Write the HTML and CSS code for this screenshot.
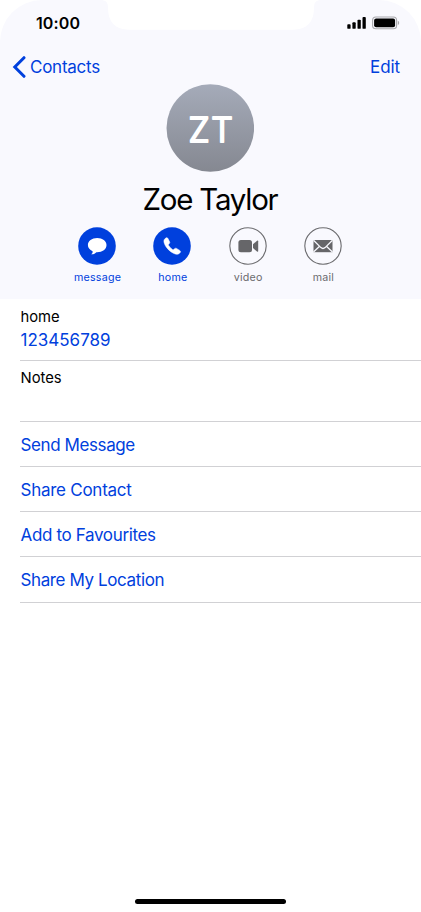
FILE: index.html
```html
<!DOCTYPE html>
<html lang="en">
<head>
<meta charset="utf-8">
<title>Zoe Taylor</title>
<link rel="stylesheet" href="styles.css">
</head>
<body>
<main class="phone">
  <header class="header">
    <svg class="notch" width="222" height="30" viewBox="0 0 222 30"><path d="M0 0C6 0 8 2 8 8C8 22 15 29.700 29 29.700H193C207 29.700 214 22 214 8C214 2 216 0 222 0Z" fill="#fff"/></svg>
    <div class="status">
      <span class="time">10:00</span>
      <svg class="indicators" width="52" height="14" viewBox="0 0 52 14">
        <rect x="0.300" y="8.200" width="3.300" height="4.600" rx="0.900"/>
        <rect x="5.400" y="6.300" width="3.300" height="6.500" rx="0.900"/>
        <rect x="10.500" y="3.700" width="3.300" height="9.100" rx="0.900"/>
        <rect x="15.500" y="1" width="3.300" height="11.800" rx="0.900"/>
        <rect x="25.600" y="1" width="24" height="11.800" rx="3.300" fill="none" stroke="#a9a9ad" stroke-width="1.100"/>
        <rect x="27.100" y="2.500" width="21" height="8.800" rx="2"/>
        <path d="M50.800 4.800Q52.200 5.400 52.200 6.900T50.800 9Z" fill="#a9a9ad"/>
      </svg>
    </div>
    <nav class="nav">
      <a class="back"><svg width="14" height="22" viewBox="0 0 14 22"><path d="M12 1.700L2.800 11L12 20.300" fill="none" stroke="#0040dd" stroke-width="3" stroke-linecap="round" stroke-linejoin="miter"/></svg><span class="contacts">Contacts</span></a>
      <a class="edit">Edit</a>
    </nav>
    <svg class="avatar" width="88" height="88" viewBox="0 0 88 88">
      <defs><linearGradient id="shade" x1="0" y1="0" x2="0" y2="1"><stop offset="0" stop-color="#a5abb9"/><stop offset="1" stop-color="#858891"/></linearGradient></defs>
      <circle cx="44.300" cy="44" r="43.800" fill="url(#shade)"/>
      <text class="initials" x="22.600 45.200" y="57.900">ZT</text>
    </svg>
    <h1 class="name">Zoe Taylor</h1>
    <div class="actions">
      <a class="action"><svg width="38" height="38" viewBox="0 0 38 38"><circle cx="19" cy="19" r="18.800" fill="#0040dd"/><path d="M19.200 11C13.900 11 9.900 14 9.900 18C9.900 20.700 11.600 22.900 14.600 24.200C14.900 25.700 14 26.700 13.100 27.200C15.300 27.500 17.300 26.400 18.300 25.200C24 25.500 28.500 22.400 28.500 18C28.500 14 24.500 11 19.200 11Z" fill="#fff"/></svg><span>message</span></a>
      <a class="action"><svg width="38" height="38" viewBox="0 0 38 38"><circle cx="19" cy="19" r="18.800" fill="#0040dd"/><path d="M13.300 10.800C11.700 11.600 10.500 13 11 15.200C12.100 20.100 17.300 25.400 22.300 27C24.500 27.700 26.500 26.800 27.400 25.200C27.700 24.500 27.400 23.900 26.700 23.400L23.500 21.400C22.800 21 22.200 21.200 21.600 21.700L20.600 22.500C20.200 22.800 19.900 22.700 19.500 22.500C17.900 21.400 16.700 20 15.600 18.400C15.300 17.900 15.300 17.600 15.700 17.200L16.500 16.200C16.900 15.700 16.900 15.200 16.500 14.600L14.800 11.300C14.400 10.600 13.900 10.500 13.300 10.800Z" fill="#fff" stroke="#fff" stroke-width="0.500"/></svg><span>home</span></a>
      <a class="action off"><svg width="38" height="38" viewBox="0 0 38 38"><circle cx="19" cy="19" r="18.200" fill="none" stroke="#6b6b6e" stroke-width="1.100"/><rect x="9.400" y="13" width="13.600" height="12.200" rx="2.500" fill="#666669"/><path d="M24 17.300L28 13.700Q29.200 13.100 29.200 14.300V24Q29.200 25.200 28 24.500L24 21Z" fill="#666669"/></svg><span>video</span></a>
      <a class="action off"><svg width="38" height="38" viewBox="0 0 38 38"><circle cx="19" cy="19" r="18.200" fill="none" stroke="#6b6b6e" stroke-width="1.100"/><rect x="9.500" y="13" width="19" height="12.200" fill="#666669"/><path d="M9.500 13.200L16.900 20.600Q19 22.500 21.100 20.600L28.500 13.200M9.500 25L15.600 19.300M28.500 25L22.400 19.300" fill="none" stroke="#f9f9fe" stroke-width="1.300"/></svg><span>mail</span></a>
    </div>
  </header>
  <section class="details">
    <div class="row phone-row"><span class="label">home</span><a class="number">123456789</a></div>
    <div class="row notes"><span class="label">Notes</span></div>
    <a class="row link"><span class="t-send">Send Message</span></a>
    <a class="row link"><span class="t-share">Share Contact</span></a>
    <a class="row link"><span class="t-add">Add to Favourites</span></a>
    <a class="row link"><span class="t-loc">Share My Location</span></a>
  </section>
  <div class="home-bar"></div>
</main>
</body>
</html>
```
FILE: styles.css
```css
* { box-sizing: border-box; }
body { margin: 0; background: #fff; }
.phone {
  width: 421px;
  height: 912px;
  display: flex;
  flex-direction: column;
  overflow: hidden;
  font-family: Inter, "Liberation Sans", sans-serif;
  font-size: 17px;
  color: #000;
}
.header {
  position: relative;
  height: 299px;
  flex: none;
  display: flex;
  flex-direction: column;
  align-items: center;
  background: #f9f9fe;
  border-radius: 42px 42px 0 0;
}
.notch { position: absolute; left: 100px; top: 0; }
.status {
  width: 100%;
  height: 46px;
  padding: 0 22px 0 36px;
  display: flex;
  align-items: center;
  justify-content: space-between;
}
.time { font-size: 16px; font-weight: 600; line-height: 20px; letter-spacing: 0.100px; }
.indicators { overflow: visible; }
.nav {
  width: 100%;
  height: 38px;
  padding: 0 21px 0 12px;
  display: flex;
  align-items: center;
  justify-content: space-between;
  color: #0040dd;
  line-height: 24px;
}
.back { display: flex; align-items: center; gap: 4px; margin-top: 4px; }
.contacts { letter-spacing: -0.250px; }
.edit { margin-top: 4px; letter-spacing: -0.100px; }
.avatar { flex: none; display: block; margin-right: 1px; }
.initials {
  font-size: 34px;
  font-weight: 300;
  fill: #fff;
  stroke: #fff;
  stroke-width: 1.900px;
  stroke-linejoin: round;
}
.name { margin: 7px 1px 0 0; font-size: 29.500px; font-weight: 400; line-height: 40px; letter-spacing: -1.250px; white-space: nowrap; }
.actions { display: flex; margin: 8px 1px 0 0; }
.action {
  width: 75.300px;
  display: flex;
  flex-direction: column;
  align-items: center;
  color: #0040dd;
  font-size: 10.700px;
  line-height: 14px;
  letter-spacing: 0.200px;
}
.action span { margin-top: 6px; padding-left: 1px; }
.off { color: #6b6b6e; }
.details { padding-left: 20px; }
.row { display: flex; border-bottom: 1px solid #d1d1d4; }
.phone-row { height: 62px; flex-direction: column; padding-top: 8px; }
.label { padding-left: 0.500px; font-size: 14.800px; line-height: 20px; }
.number { padding-left: 0.500px; color: #0040dd; line-height: 24px; margin-top: 1px; }
.notes { height: 61px; padding-top: 7px; }
.link { height: 45.150px; align-items: center; padding: 2px 0 0 0.500px; color: #0040dd; line-height: 24px; }
.t-send { letter-spacing: -0.400px; }
.t-share { letter-spacing: -0.260px; }
.t-add { letter-spacing: -0.350px; }
.t-loc { letter-spacing: -0.390px; }
.home-bar { width: 151px; height: 5px; margin: auto auto 8px 135px; border-radius: 3px; background: #000; }
```
